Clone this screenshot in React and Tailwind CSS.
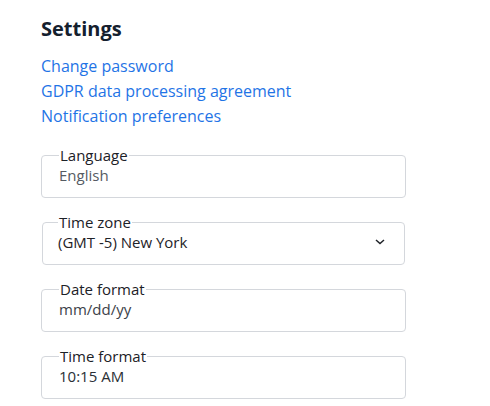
import React from "react";

const FIELDS = [
  { label: "Language", value: "English", tone: "text-[#555b63]" },
  { label: "Time zone", value: "(GMT -5) New York", tone: "text-[#1f2328]", select: true },
  { label: "Date format", value: "mm/dd/yy", tone: "text-[#3c4249]" },
  { label: "Time format", value: "10:15 AM", tone: "text-[#2a2f35]" }
];

const LINKS = ["Change password", "GDPR data processing agreement", "Notification preferences"];

function Field({ label, value, tone, select }) {
  return (
    <fieldset
      className={
        "rounded-[4px] border border-[#d4d7dc] pb-[12px] " +
        (select ? "mx-px pl-[15px] pr-[16px]" : "pl-[17px] pr-[16px]")
      }
    >
      <legend className="px-px text-[15px] leading-[16px] text-[#1c2127]">{label}</legend>
      <div className="flex items-center justify-between pt-[2px]">
        <span className={"text-[15px] leading-[20px] " + tone}>{value}</span>
        {select && (
          <svg width="10" height="6" viewBox="0 0 10 6" className="mr-[3px]">
            <path d="M1 1l4 3.5L9 1" fill="none" stroke="#1f2328" strokeWidth="1.5" />
          </svg>
        )}
      </div>
    </fieldset>
  );
}

export default function App() {
  return (
    <div className="min-h-[406px] bg-white pl-[41px] pt-[16px] font-['Open_Sans',sans-serif]">
      <div className="w-[365px]">
        <h1 className="text-[20px] font-bold leading-[26px] text-[#14202e]">Settings</h1>
        <div className="mt-[12px] flex flex-col">
          {LINKS.map((l) => (
            <a key={l} href="#" className="text-[16px] leading-[25px] text-[#1f74e6]">
              {l}
            </a>
          ))}
        </div>
        <div className="mt-[18px] flex flex-col gap-[16px]">
          {FIELDS.map((f) => (
            <Field key={f.label} {...f} />
          ))}
        </div>
      </div>
    </div>
  );
}
